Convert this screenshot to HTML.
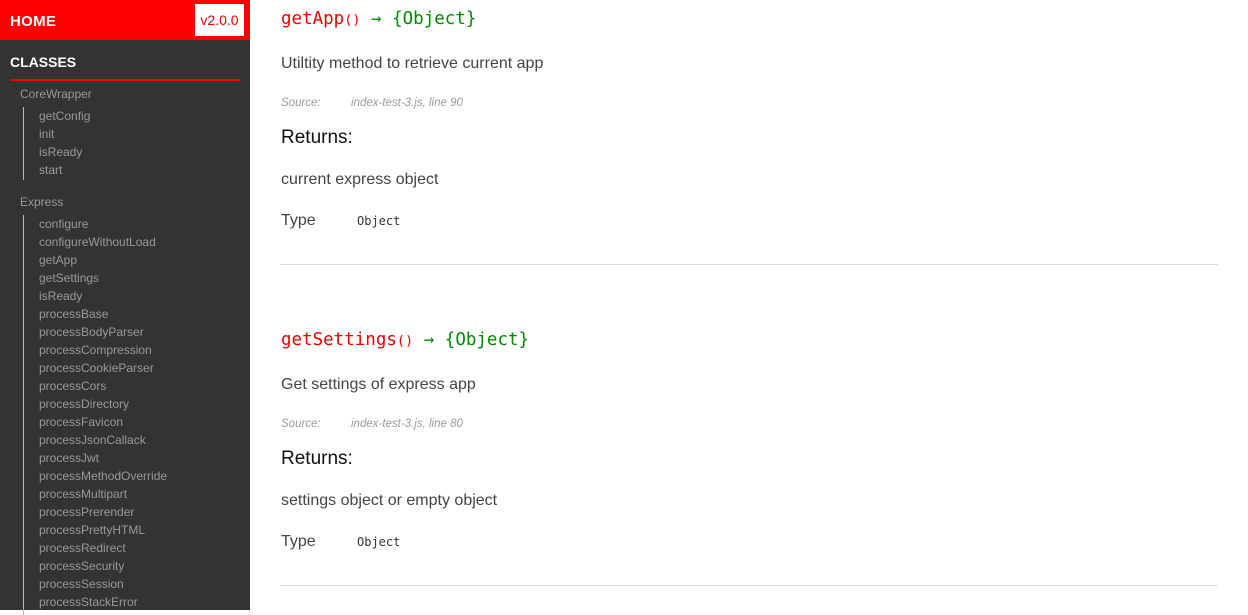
<!DOCTYPE html>
<html><head><style>
body{margin:0;width:1248px;height:610px;overflow:hidden;font-family:"Liberation Sans",sans-serif;background:#fff;position:relative}
.side{position:absolute;left:0;top:0;width:250px;height:610px;background:#333;}
.head{height:40px;background:#f00;position:relative}
.head b{position:absolute;left:10px;top:13px;color:#fff;font-size:15px;letter-spacing:.3px}
.ver{position:absolute;left:195px;top:4px;width:49px;height:32px;background:#fff;color:#e00;font-size:14px;line-height:32px;text-align:center}
.cls{position:absolute;left:10px;top:54px;color:#fff;font-weight:bold;font-size:14px}
.rl{position:absolute;left:10px;top:79px;width:230px;height:2px;background:#e00}
.s{position:absolute;color:#999;font-size:12px;line-height:18px}
.vl{position:absolute;left:23px;width:1px;background:#bbb}
.m{position:absolute;left:281px;}
.t{font-family:"DejaVu Sans Mono","Liberation Mono",monospace;font-size:17.5px;color:#e00}
.t .p{font-size:13.5px}.t .g{color:#080}
.d{font-size:16px;color:#444}
.src{font-size:11.5px;color:#999;font-style:italic}
.ret{font-size:19px;color:#111}
.mono{font-family:"DejaVu Sans Mono","Liberation Mono",monospace;font-size:12px;color:#333}
.hr{position:absolute;left:280px;width:938px;height:1px;background:#ddd}
</style></head><body>
<div class="side">
<div class="head"><b>HOME</b><div class="ver">v2.0.0</div></div>
<div class="cls">CLASSES</div><div class="rl"></div>
<div class="s" style="left:20px;top:85px">CoreWrapper</div>
<div class="vl" style="top:107px;height:73px"></div>
<div class="s" style="left:39px;top:107px">getConfig<br>init<br>isReady<br>start</div>
<div class="s" style="left:20px;top:193px">Express</div>
<div class="vl" style="top:215px;height:400px"></div>
<div class="s" style="left:39px;top:215px">configure<br>configureWithoutLoad<br>getApp<br>getSettings<br>isReady<br>processBase<br>processBodyParser<br>processCompression<br>processCookieParser<br>processCors<br>processDirectory<br>processFavicon<br>processJsonCallack<br>processJwt<br>processMethodOverride<br>processMultipart<br>processPrerender<br>processPrettyHTML<br>processRedirect<br>processSecurity<br>processSession<br>processStackError</div>
</div>

<div class="m t" style="top:9px">getApp<span class="p">()</span> <span class="g">→ {Object}</span></div>
<div class="m d" style="top:55px">Utiltity method to retrieve current app</div>
<div class="m src" style="top:97px">Source:</div><div class="m src" style="left:351px;top:97px">index-test-3.js, line 90</div>
<div class="m ret" style="top:127px">Returns:</div>
<div class="m d" style="top:171px">current express object</div>
<div class="m d" style="top:212px">Type</div><div class="m mono" style="left:357px;top:214px">Object</div>
<div class="hr" style="top:264px"></div>

<div class="m t" style="top:330px">getSettings<span class="p">()</span> <span class="g">→ {Object}</span></div>
<div class="m d" style="top:376px">Get settings of express app</div>
<div class="m src" style="top:418px">Source:</div><div class="m src" style="left:351px;top:418px">index-test-3.js, line 80</div>
<div class="m ret" style="top:448px">Returns:</div>
<div class="m d" style="top:492px">settings object or empty object</div>
<div class="m d" style="top:533px">Type</div><div class="m mono" style="left:357px;top:535px">Object</div>
<div class="hr" style="top:585px"></div>
</body></html>
